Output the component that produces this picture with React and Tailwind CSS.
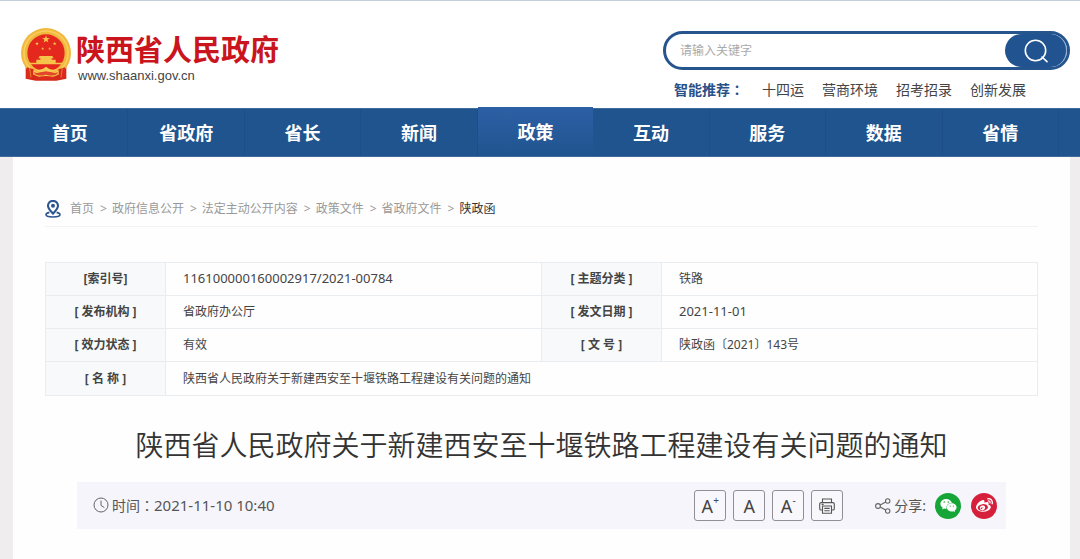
import React from 'react';
import { FaWeixin, FaWeibo } from 'react-icons/fa';

const navItems = ['首页', '省政府', '省长', '新闻', '政策', '互动', '服务', '数据', '省情'];
const hotWords = ['十四运', '营商环境', '招考招录', '创新发展'];
const crumbs = ['首页', '政府信息公开', '法定主动公开内容', '政策文件', '省政府文件'];

const infoRows = [
  ['[索引号]', '116100000160002917/2021-00784', '[ 主题分类 ]', '铁路'],
  ['[ 发布机构 ]', '省政府办公厅', '[ 发文日期 ]', '2021-11-01'],
  ['[ 效力状态 ]', '有效', '[ 文 号 ]', '陕政函〔2021〕143号'],
];

const starPoints = '0,-10 2.4,-3.2 9.5,-3.1 3.8,1.2 5.9,8.1 0,4 -5.9,8.1 -3.8,1.2 -9.5,-3.1 -2.4,-3.2';

const Emblem = () => (
  <svg viewBox="0 0 150 159" className="w-[50px] h-[53px] shrink-0" aria-hidden="true">
    <path d="M14 108 L14 152 L44 158 H106 L136 152 L136 108 Z" fill="#d42a1c" />
    <circle cx="75" cy="75" r="75" fill="#f0b83f" />
    <circle cx="75" cy="75" r="66" fill="none" stroke="#f8ce5c" strokeWidth="5" />
    <circle cx="75" cy="75" r="56" fill="#e5281d" />
    <g fill="#f6c24a">
      <polygon points={starPoints} transform="translate(75 34) scale(1.2)" />
      <polygon points={starPoints} transform="translate(48 47) scale(0.55)" />
      <polygon points={starPoints} transform="translate(101 47) scale(0.55)" />
      <polygon points={starPoints} transform="translate(65 62) scale(0.5)" />
      <polygon points={starPoints} transform="translate(86 62) scale(0.5)" />
      <path d="M56 84 H94 L98 91 H92 V95 H104 V104 H126 V109 H24 V104 H46 V95 H58 V91 H52 Z" />
    </g>
    <path d="M18 118 L38 124 L34 150 L16 152 Z M132 118 L112 124 L116 150 L134 152 Z" fill="#db2b1d" />
    <path d="M38 132 Q56 140 75 124 Q94 140 112 132 Q104 148 75 140 Q46 148 38 132 Z" fill="#e5452a" />
    <path d="M42 122 Q60 130 75 116 Q90 130 108 122 Q100 136 75 130 Q50 136 42 122 Z" fill="#f8cb55" />
    <path d="M44 150 Q75 138 106 150 L103 157 Q75 149 47 157 Z" fill="#db2b1d" />
    <path d="M26 120 L30 148 M124 120 L120 148" stroke="#f0a338" strokeWidth="2" />
  </svg>
);

const SearchIcon = () => (
  <svg viewBox="0 0 24 24" className="w-6 h-6" fill="none" stroke="#fff" strokeWidth="1.6" strokeLinecap="round" aria-hidden="true">
    <circle cx="11.5" cy="11.5" r="10.2" />
    <path d="M18 18 L23 22.6" />
  </svg>
);

const PinIcon = () => (
  <svg viewBox="0 0 16 18" className="w-4 h-[18px] mr-[9px]" fill="none" stroke="#2c5490" aria-hidden="true">
    <path d="M8 13.6 C5.4 10.7 3 8.7 3 5.8 A5 4.9 0 0 1 13 5.8 C13 8.7 10.6 10.7 8 13.6 Z" strokeWidth="2.1" />
    <circle cx="8" cy="5.8" r="2" fill="#2c5490" stroke="none" />
    <path d="M4.4 12.4 C2.2 12.9 1 13.6 1 14.5 C1 16 4 17 8 17 C12 17 15 16 15 14.5 C15 13.6 13.8 12.9 11.6 12.4" strokeWidth="1.6" />
  </svg>
);

const ClockIcon = () => (
  <svg viewBox="0 0 16 16" className="w-4 h-4 mr-[3px]" fill="none" stroke="#666" aria-hidden="true">
    <circle cx="8" cy="8" r="7" />
    <path d="M8 3.6 V8.4 L11.4 10.6" />
  </svg>
);

const PrintIcon = () => (
  <svg viewBox="0 0 16 16" className="w-4 h-4" fill="none" stroke="#555" strokeWidth="1.1" aria-hidden="true">
    <path d="M3.5 4.5 V1 H12.5 V4.5" />
    <path d="M3.5 12 H2 A1.3 1.3 0 0 1 0.7 10.7 V6 A1.4 1.4 0 0 1 2.1 4.6 H13.9 A1.4 1.4 0 0 1 15.3 6 V10.7 A1.3 1.3 0 0 1 14 12 H12.5" />
    <path d="M3.5 8 H12.5 V15.2 H3.5 Z M5.3 10.4 H10.7 M5.3 12.7 H10.7 M2.6 6.4 H4.6" />
  </svg>
);

const ShareIcon = () => (
  <svg viewBox="0 0 16 16" className="w-4 h-4 mr-[3px]" fill="none" stroke="#666" strokeWidth="1.1" aria-hidden="true">
    <circle cx="3" cy="8" r="2.4" />
    <circle cx="12.7" cy="3" r="2.2" />
    <circle cx="12.7" cy="13" r="2.2" />
    <path d="M5.2 6.9 L10.7 4 M5.2 9.1 L10.7 12" />
  </svg>
);

// the TC face centres the full-width colon in its box
const Colon = () => <span className="font-['Noto_Sans_CJK_TC',sans-serif]" lang="zh-Hant">：</span>;

const toolButton = 'w-8 h-[31px] flex items-center justify-center rounded-[3px] border border-[#8f8f95] bg-[#f8f8fc] text-[#444]';

const Header = () => (
  <header className="border-t border-[#c3d0dc] bg-white flex justify-between h-[108px] pl-[21px] pr-[10px]">
    <a href="#" className="flex items-start pt-[27px]">
      <Emblem />
      <span className="ml-[5px] pt-1">
        <span className="block text-[29px] leading-9 font-bold text-[#c9151b]">陕西省人民政府</span>
        <span className="block pl-[2px] text-[13px] leading-4 text-[#444] font-['Liberation_Sans',sans-serif]">www.shaanxi.gov.cn</span>
      </span>
    </a>
    <div className="w-[407px] pt-[30px]">
      <form className="flex h-[39px] rounded-full border-[3px] border-[#26548c] bg-white">
        <input
          type="text"
          aria-label="请输入关键字"
          placeholder="请输入关键字"
          className="flex-1 min-w-0 pl-[14px] text-xs text-[#333] placeholder:text-[#aaa] bg-transparent outline-none"
        />
        <button type="button" aria-label="搜索" className="w-[62px] flex items-center justify-center rounded-full bg-[#205390] border-r border-[#8eb0d6]">
          <SearchIcon />
        </button>
      </form>
      <div className="flex items-center mt-[9px] pl-[11px] text-sm leading-5 text-[#444]">
        <span className="font-bold text-[#2a5088] mr-[18px]">智能推荐<Colon /></span>
        <div className="flex gap-[18px]">
          {hotWords.map((word) => (
            <a key={word} href="#">{word}</a>
          ))}
        </div>
      </div>
    </div>
  </header>
);

const navLink = 'flex-1 flex items-center justify-center pt-px text-lg font-bold text-white border-r border-[#1d4e88]';
const navLinkActive = 'flex-1 flex items-center justify-center -mt-[2px] text-lg font-bold text-white bg-linear-to-b from-[#2c60a5] to-[#20548f]';

const Nav = () => (
  <nav className="flex h-[49px] pl-3 pr-[21px] bg-[#20548f] border-y border-[#3f6a9e]">
    {navItems.map((item) => (
      <a key={item} href="#" className={item === '政策' ? navLinkActive : navLink}>
        {item}
      </a>
    ))}
  </nav>
);

const Breadcrumb = () => (
  <div className="flex items-center h-[37px] pt-[2px] border-b border-[#f2f2f4] text-xs text-[#999]">
    <PinIcon />
    {crumbs.map((crumb) => (
      <React.Fragment key={crumb}>
        <a href="#">{crumb}</a>
        <span className="ml-[6px] mr-[5px]">&gt;</span>
      </React.Fragment>
    ))}
    <span className="text-[#333]">陕政函</span>
  </div>
);

const labelCell = 'border border-[#e9edf0] bg-[#f7f9fa] text-center font-bold text-[#444]';
const valueCell = 'border border-[#e9edf0] pl-[17px] text-[#444]';
const numberCell = 'border border-[#e9edf0] pl-[17px] pb-[2px] text-[13px] leading-4 text-[#444]';

const cellClass = (value) => (/^[\d/-]+$/.test(value) ? numberCell : valueCell);

const InfoTable = () => (
  <table className="w-full table-fixed border-collapse mt-[35px] text-xs">
    <colgroup>
      <col className="w-[120px]" />
      <col />
      <col className="w-[120px]" />
      <col />
    </colgroup>
    <tbody>
      {infoRows.map(([label, value, label2, value2]) => (
        <tr key={label} className="h-[33px]">
          <th scope="row" className={labelCell}>{label}</th>
          <td className={cellClass(value)}>{value}</td>
          <th scope="row" className={labelCell}>{label2}</th>
          <td className={cellClass(value2)}>{value2}</td>
        </tr>
      ))}
      <tr className="h-[34px]">
        <th scope="row" className={labelCell}>[ 名 称 ]</th>
        <td colSpan={3} className={valueCell}>陕西省人民政府关于新建西安至十堰铁路工程建设有关问题的通知</td>
      </tr>
    </tbody>
  </table>
);

const Toolbar = () => (
  <div className="flex items-center justify-between h-[47px] mx-8 mt-[17px] pl-4 pr-[9px] bg-[#f5f5fb] text-sm text-[#555]">
    <div className="flex items-center">
      <ClockIcon />
      <span>时间<Colon /></span>
      <time dateTime="2021-11-10T10:40" className="text-[15px]">2021-11-10 10:40</time>
    </div>
    <div className="flex items-center">
      <div className="flex gap-[7px] mr-8">
        <button type="button" className={toolButton}>
          <span className="text-lg leading-none">A</span>
          <sup className="-top-[6px] text-[10px]">+</sup>
        </button>
        <button type="button" className={toolButton}>
          <span className="text-lg leading-none">A</span>
        </button>
        <button type="button" className={toolButton}>
          <span className="text-lg leading-none">A</span>
          <sup className="-top-[6px] text-[10px]">-</sup>
        </button>
        <button type="button" aria-label="打印" className={toolButton}>
          <PrintIcon />
        </button>
      </div>
      <ShareIcon />
      <span>分享:</span>
      <a href="#" aria-label="微信" className="ml-[9px] w-[26px] h-[26px] flex items-center justify-center rounded-full bg-[#16a637] text-white">
        <FaWeixin size={17} />
      </a>
      <a href="#" aria-label="微博" className="ml-[10px] w-[26px] h-[26px] flex items-center justify-center rounded-full bg-[#d61f3b] text-white">
        <FaWeibo size={17} />
      </a>
    </div>
  </div>
);

const App = () => {
  return (
    <div className="min-h-screen flex flex-col bg-[#efedee] font-['Noto_Sans','Noto_Sans_CJK_SC',sans-serif]">
      <Header />
      <Nav />
      <main className="flex-1 ml-[13px] mr-[10px] px-8 pt-[33px] bg-[#fefefe]">
        <Breadcrumb />
        <InfoTable />
        <h1 className="mt-[27px] text-[28px] leading-[42px] font-[350] text-center text-[#333] font-['Noto_Sans_CJK_SC',sans-serif]">
          陕西省人民政府关于新建西安至十堰铁路工程建设有关问题的通知
        </h1>
        <Toolbar />
      </main>
    </div>
  );
};

export default App;
